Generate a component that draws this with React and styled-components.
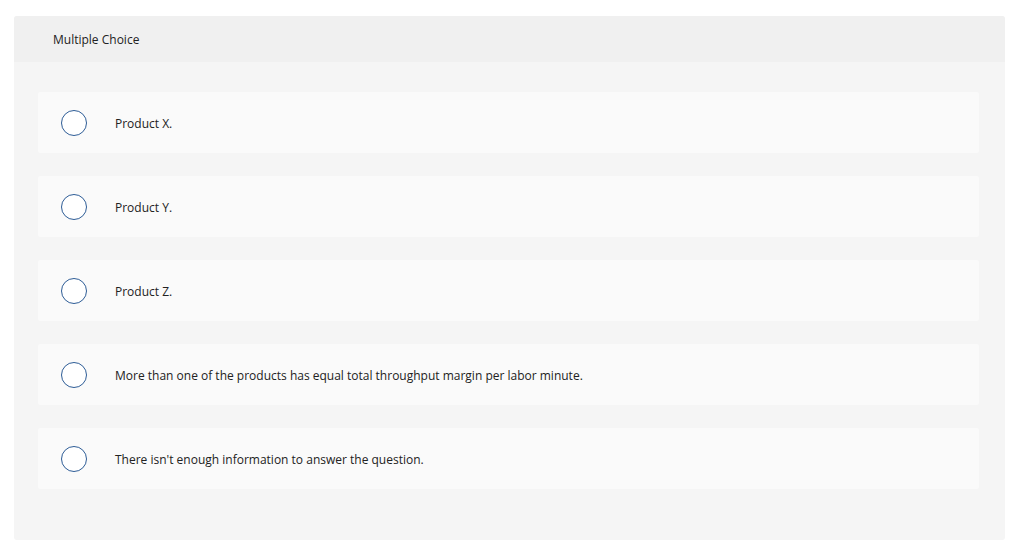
import React from 'react';
import styled, { createGlobalStyle } from 'styled-components';

const GlobalStyle = createGlobalStyle`
  html, body {
    margin: 0;
    padding: 0;
    background: #ffffff;
  }
  body {
    font-family: "Open Sans", "Liberation Sans", Arial, sans-serif;
    color: #222222;
  }
`;

const Page = styled.div`
  padding: 16px 19px 14px 14px;
`;

const Panel = styled.section`
  background: #f5f5f5;
  border-radius: 3px;
  overflow: hidden;
`;

const Header = styled.div`
  height: 46px;
  display: flex;
  align-items: center;
  padding-left: 39px;
  padding-top: 1px;
  box-sizing: border-box;
  background: #f0f0f0;
  font-size: 12px;
  color: #222222;
`;

const OptionList = styled.div`
  display: flex;
  flex-direction: column;
  gap: 23px;
  padding: 30px 26px 51px 24px;
`;

const Option = styled.label`
  height: 61px;
  display: flex;
  align-items: center;
  padding-left: 23px;
  background: #fafafa;
  border-radius: 2px;
  cursor: pointer;
`;

const Radio = styled.span`
  flex: 0 0 auto;
  width: 24px;
  height: 24px;
  border: 1px solid #2d5c96;
  border-radius: 50%;
  background: #ffffff;
  margin-right: 28px;
`;

const OptionText = styled.span`
  font-size: 12px;
  color: #222222;
  padding-top: 1px;
`;

const options = [
  'Product X.',
  'Product Y.',
  'Product Z.',
  'More than one of the products has equal total throughput margin per labor minute.',
  "There isn't enough information to answer the question.",
];

export default function App() {
  return (
    <>
      <GlobalStyle />
      <Page>
        <Panel>
          <Header>Multiple Choice</Header>
          <OptionList>
            {options.map((text) => (
              <Option key={text}>
                <Radio />
                <OptionText>{text}</OptionText>
              </Option>
            ))}
          </OptionList>
        </Panel>
      </Page>
    </>
  );
}
